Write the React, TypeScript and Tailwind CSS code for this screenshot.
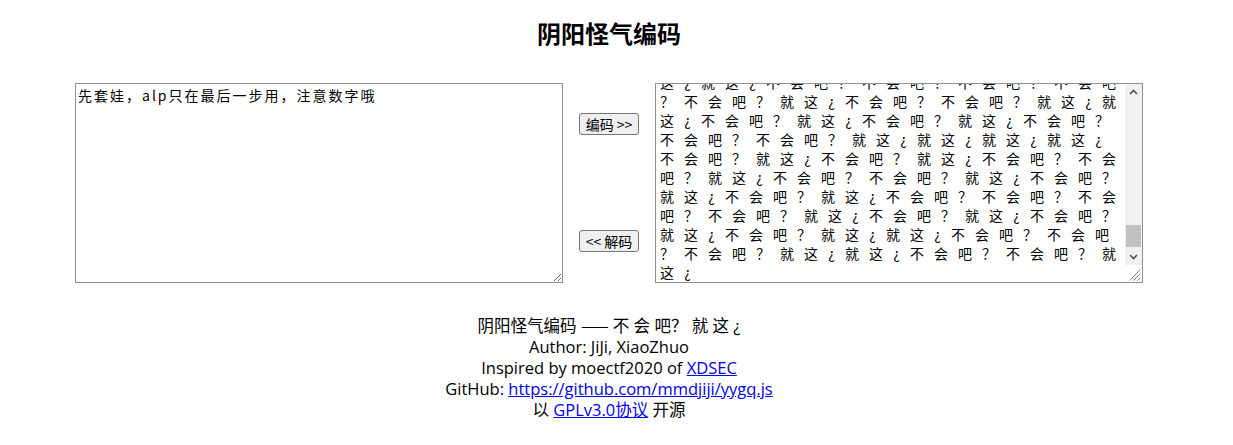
import React from "react";

const encoded = [
  "这 ¿ 就 这 ¿ 不 会 吧 ？ 不 会 吧 ？ 不 会 吧 ？ 不 会 吧",
  "？ 不 会 吧 ？ 就 这 ¿ 不 会 吧 ？ 不 会 吧 ？ 就 这 ¿ 就",
  "这 ¿ 不 会 吧 ？ 就 这 ¿ 不 会 吧 ？ 就 这 ¿ 不 会 吧 ？",
  "不 会 吧 ？ 不 会 吧 ？ 就 这 ¿ 就 这 ¿ 就 这 ¿ 就 这 ¿",
  "不 会 吧 ？ 就 这 ¿ 不 会 吧 ？ 就 这 ¿ 不 会 吧 ？ 不 会",
  "吧 ？ 就 这 ¿ 不 会 吧 ？ 不 会 吧 ？ 就 这 ¿ 不 会 吧 ？",
  "就 这 ¿ 不 会 吧 ？ 就 这 ¿ 不 会 吧 ？ 不 会 吧 ？ 不 会",
  "吧 ？ 不 会 吧 ？ 就 这 ¿ 不 会 吧 ？ 就 这 ¿ 不 会 吧 ？",
  "就 这 ¿ 不 会 吧 ？ 就 这 ¿ 就 这 ¿ 不 会 吧 ？ 不 会 吧",
  "？ 不 会 吧 ？ 就 这 ¿ 就 这 ¿ 不 会 吧 ？ 不 会 吧 ？ 就",
  "这 ¿",
];

function Chevron({ up }: { up?: boolean }) {
  return (
    <svg width="17" height="17" viewBox="0 0 17 17">
      <polyline
        points={up ? "5,10 8.5,6.5 12,10" : "5,7 8.5,10.5 12,7"}
        fill="none"
        stroke="#505050"
        strokeWidth="1.6"
      />
    </svg>
  );
}

function Resizer() {
  return (
    <svg width="17" height="17" viewBox="0 0 17 17">
      <g stroke="#8a8a8a" strokeWidth="1">
        <line x1="15.5" y1="4.5" x2="4.5" y2="15.5" />
        <line x1="15.5" y1="8.5" x2="8.5" y2="15.5" />
        <line x1="15.5" y1="12.5" x2="12.5" y2="15.5" />
      </g>
    </svg>
  );
}

// the right box: scrolled textarea output
function Output() {
  return (
    <div className="flex w-[488px] h-[200px] border border-[#8f8f9d] bg-white">
      <div className="flex-1 overflow-hidden pl-[3px] font-['Noto_Sans_CJK_SC',sans-serif] text-[14px] text-black">
        <div className="-mt-[11px]">
          {encoded.map((line, i) => (
            <div key={i} className="flex gap-x-[8px] h-[19px] leading-[19px]">
              {line.split(" ").map((t, j) => (
                <span
                  key={j}
                  className={t === "¿" ? "w-[9px] text-center" : "w-[16px] text-center"}
                >
                  {t}
                </span>
              ))}
            </div>
          ))}
        </div>
      </div>
      <div className="flex flex-col w-[17px]">
        <div className="flex flex-col flex-1 bg-[#f1f1f1]">
          <Chevron up />
          <div className="flex-1 flex flex-col justify-end pb-[1px]">
            <div className="h-[22px] mx-[1px] bg-[#c1c1c1]" />
          </div>
          <Chevron />
        </div>
        <Resizer />
      </div>
    </div>
  );
}

export default function App() {
  return (
    <div className="w-[1218px] flex flex-col items-center bg-white text-black">
      <h2 className="mt-[17px] text-[24px] leading-[32px] font-bold font-['Noto_Sans_CJK_SC',sans-serif]">
        阴阳怪气编码
      </h2>
      <div className="mt-[34px] flex gap-4">
        <textarea
          readOnly
          defaultValue="先套娃，alp只在最后一步用，注意数字哦"
          className="w-[488px] h-[200px] border border-[#8f8f9d] px-[2px] py-[2px] text-[14px] leading-[19px] tracking-[2px] font-['Noto_Sans_CJK_SC',sans-serif] resize outline-none"
        />
        <div className="flex flex-col w-[60px] pt-[30px] gap-[95px] font-['Noto_Sans_CJK_SC',sans-serif] text-[14px]">
          <button className="h-[22px] w-[60px] border border-[#767676] rounded-[3px] bg-[#efefef] leading-[20px]">
            编码 &gt;&gt;
          </button>
          <button className="h-[22px] w-[60px] border border-[#767676] rounded-[3px] bg-[#efefef] leading-[20px]">
            &lt;&lt; 解码
          </button>
        </div>
        <Output />
      </div>
      <div className="mt-[32px] text-center text-[16.5px] leading-[21px] font-['Open_Sans','Noto_Sans_CJK_SC',sans-serif]">
        <p>
          阴阳怪气编码 <span className="font-['Noto_Sans_CJK_SC',sans-serif]">——</span> 不 会 吧？ 就 这 ¿
        </p>
        <p>Author: JiJi, XiaoZhuo</p>
        <p>
          Inspired by moectf2020 of{" "}
          <a href="#" className="text-[#0000ee] underline">XDSEC</a>
        </p>
        <p>
          GitHub:{" "}
          <a href="#" className="text-[#0000ee] underline">https://github.com/mmdjiji/yygq.js</a>
        </p>
        <p>
          以 <a href="#" className="text-[#0000ee] underline">GPLv3.0协议</a> 开源
        </p>
      </div>
    </div>
  );
}
